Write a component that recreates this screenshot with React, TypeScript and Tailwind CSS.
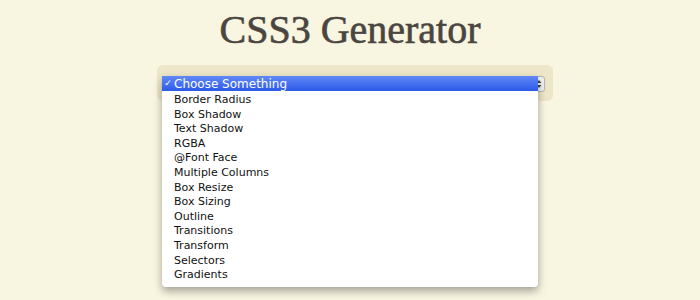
const options = [
  "Border Radius",
  "Box Shadow",
  "Text Shadow",
  "RGBA",
  "@Font Face",
  "Multiple Columns",
  "Box Resize",
  "Box Sizing",
  "Outline",
  "Transitions",
  "Transform",
  "Selectors",
  "Gradients",
];

const App = () => {
  return (
    <div className="w-[700px] h-[300px] bg-[#f8f5e0] overflow-hidden pt-[10px]">
      {/* Title */}
      <h1 className="text-center text-[40px] leading-[40px] text-[#4b4541] font-['Liberation_Serif',serif] [-webkit-text-stroke:0.6px_#4b4541]">
        CSS3 Generator
      </h1>

      {/* Select panel */}
      <div className="relative mt-[15px] ml-[157px] w-[396px] h-[36px] rounded-[6px] bg-[#ede6c8]">
        <div className="absolute left-[5px] top-[11px] w-[383px] h-[16px] rounded-[3px] bg-[#f2f2f2] border border-[#b5b5b5] flex justify-end items-center pr-[2px]">
          <svg width="6" height="10" viewBox="0 0 6 10">
            <path d="M0.5 4 L3 1 L5.5 4 Z" fill="#444" />
            <path d="M0.5 6 L3 9 L5.5 6 Z" fill="#444" />
          </svg>
        </div>

        {/* Dropdown menu */}
        <div className="absolute left-[5px] top-[11px] w-[376px] bg-white pb-[4px] rounded-b-[4px] shadow-[0_4px_9px_rgba(0,0,0,0.35)] font-['DejaVu_Sans',sans-serif] text-[11px] text-[#111]">
          <div className="h-[15px] flex items-center bg-gradient-to-b from-[#6188f7] to-[#2d59e8] text-white">
            <span className="w-[12px] text-center text-[9px]">✓</span>
            <span className="text-[12px]">Choose Something</span>
          </div>
          <ul className="pt-[2px]">
            {options.map((opt) => (
              <li key={opt} className="h-[14.6px] flex items-center pl-[12px]">
                {opt}
              </li>
            ))}
          </ul>
        </div>
      </div>
    </div>
  );
};

export default App;
